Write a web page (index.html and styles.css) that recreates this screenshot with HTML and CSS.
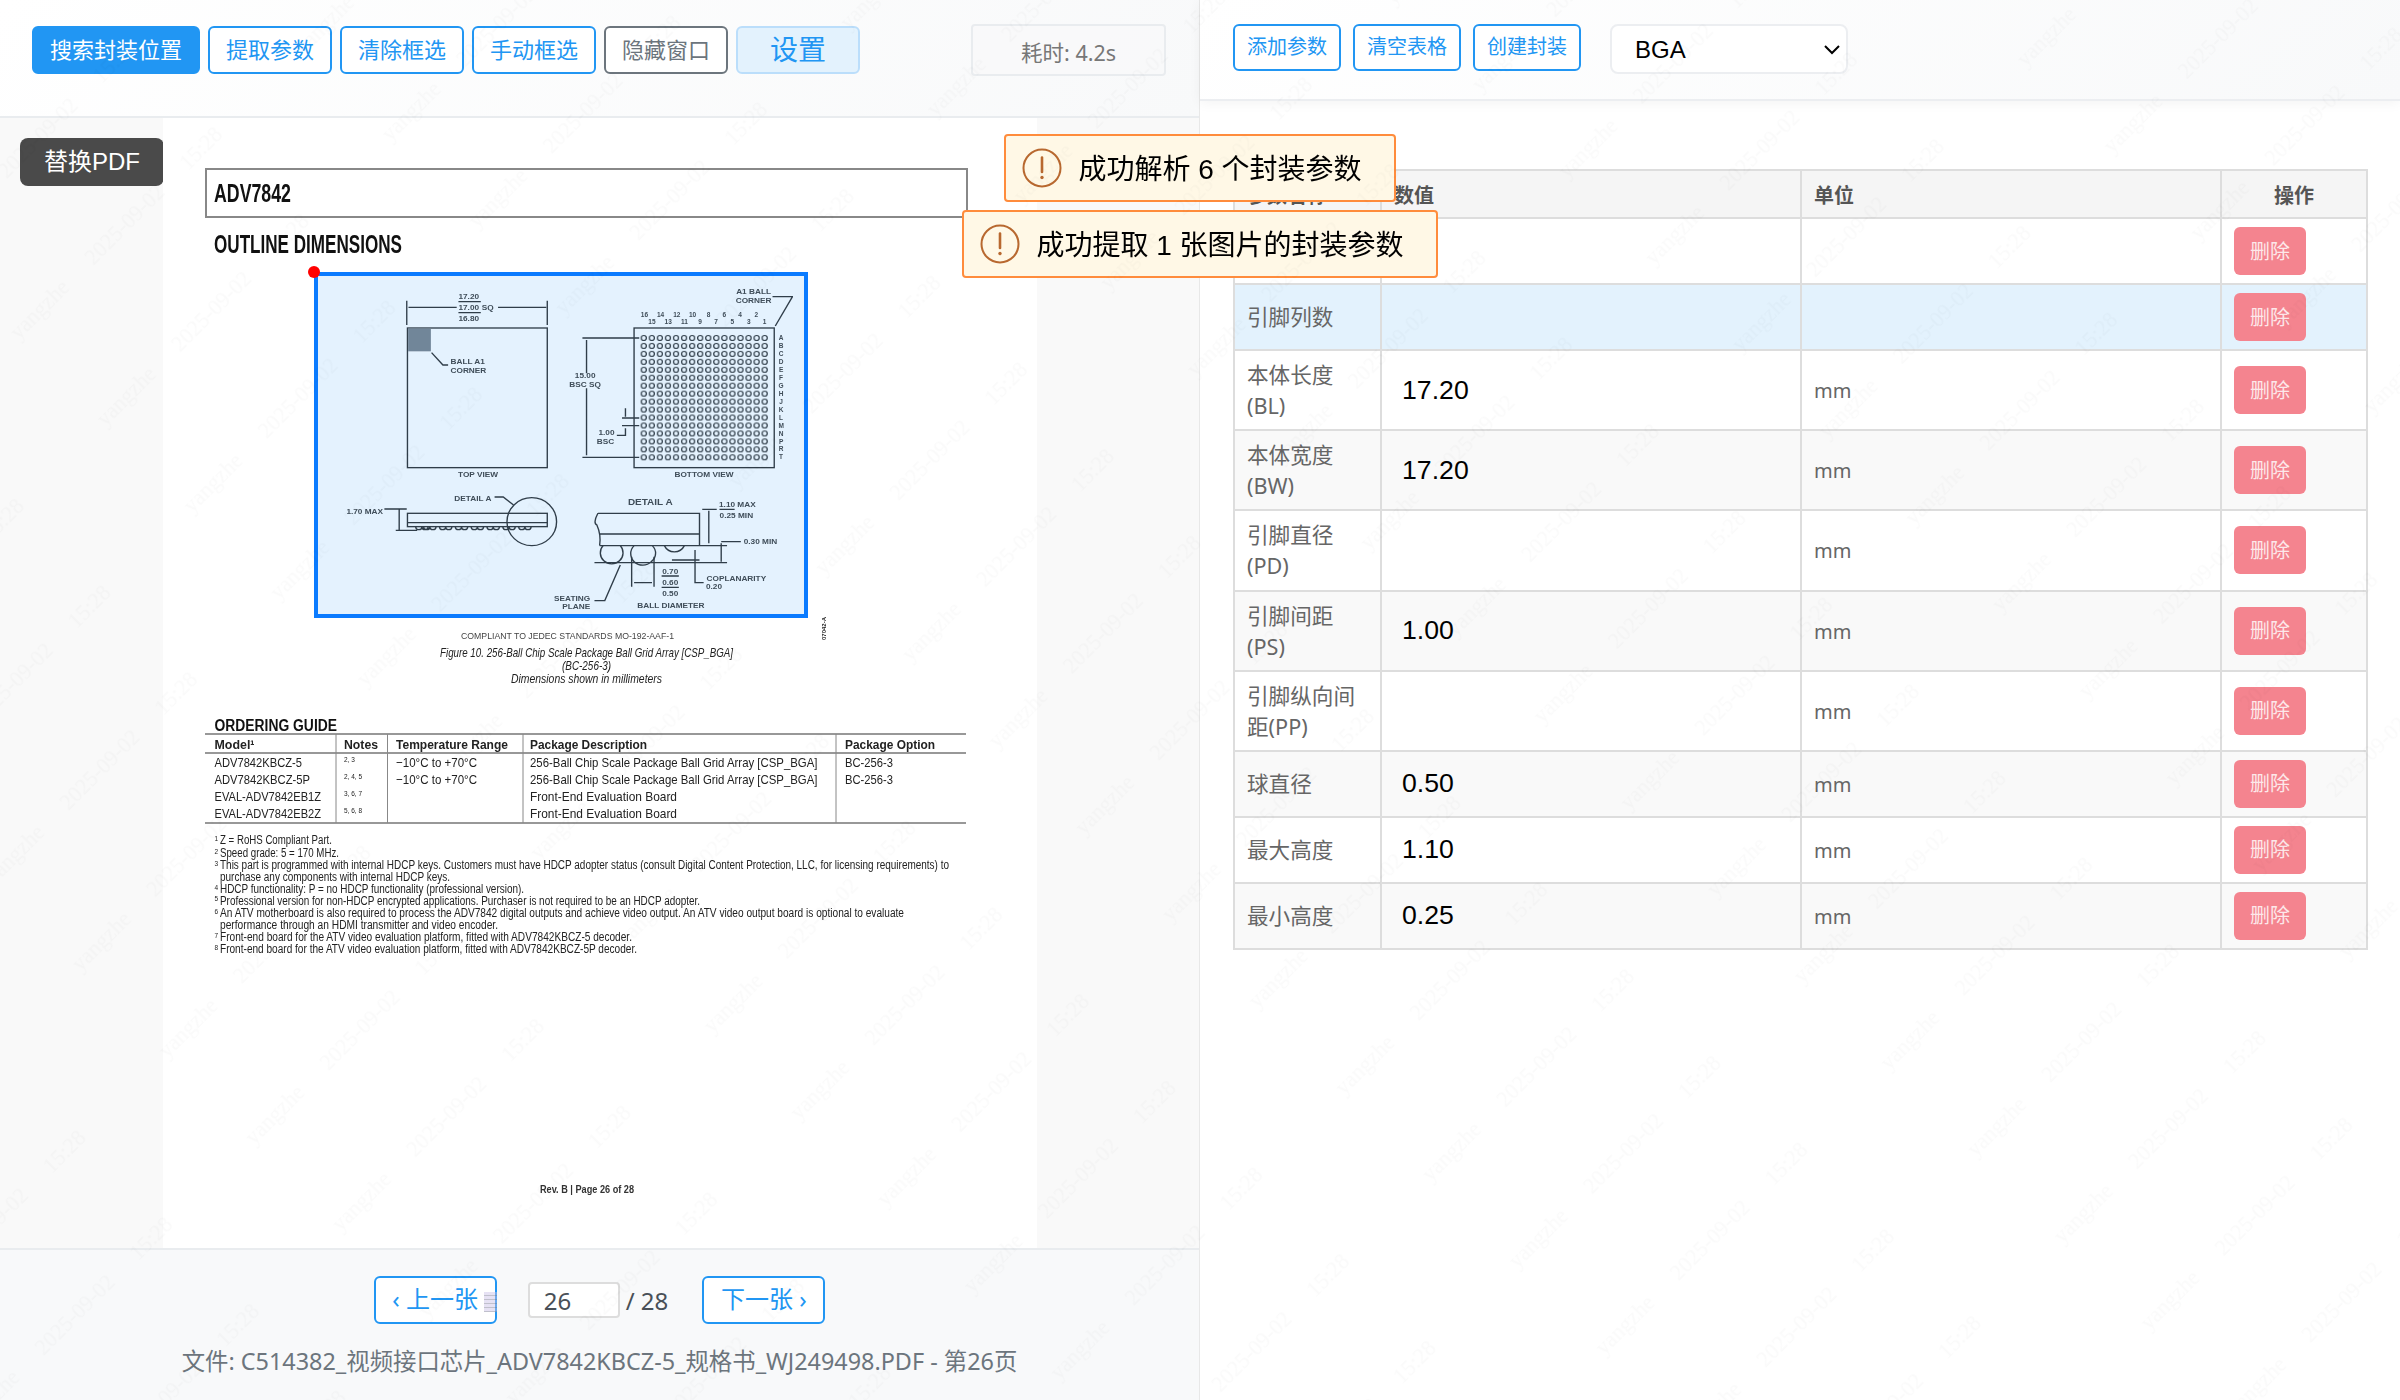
FILE: index.html
```html
<!DOCTYPE html>
<html lang="zh">
<head>
<meta charset="utf-8">
<title>封装参数提取</title>
<link rel="stylesheet" href="styles.css">
</head>
<body>
<div class="app">
  <section class="left-panel">
    <header class="left-head">
      <button class="btn btn-solid">搜索封装位置</button>
      <button class="btn btn-outline">提取参数</button>
      <button class="btn btn-outline">清除框选</button>
      <button class="btn btn-outline">手动框选</button>
      <button class="btn btn-gray">隐藏窗口</button>
      <button class="btn btn-settings">设置</button>
      <div class="time-badge">耗时: 4.2s</div>
    </header>
    <main class="viewer">
      <button class="replace-btn">替换PDF</button>
      <div class="pdf-page">
        <svg class="pdf-svg" width="874" height="1130" viewBox="163 118 874 1130" xmlns="http://www.w3.org/2000/svg">
          <defs>
            <pattern id="balls" x="986.5" y="222" width="23.4" height="23.87" patternUnits="userSpaceOnUse">
              <circle cx="11.7" cy="11.9" r="7.5" fill="none" stroke="#333" stroke-width="3.5"/>
            </pattern>
            <filter id="soft" x="0" y="0" width="100%" height="100%"><feGaussianBlur stdDeviation="1.5"/></filter>
          </defs>
          <rect x="206" y="169" width="761" height="48" fill="none" stroke="#888" stroke-width="2"/>
          <text class="pg-head" x="214" y="201.5" textLength="77" lengthAdjust="spacingAndGlyphs">ADV7842</text>
          <text class="pg-head" x="214" y="253" textLength="188" lengthAdjust="spacingAndGlyphs">OUTLINE DIMENSIONS</text>

          <g transform="translate(300 260) scale(0.3444 0.3333)" class="dg" filter="url(#soft)">
            <rect x="312" y="204" width="406" height="419"/>
            <rect x="314" y="206" width="66" height="68" fill="#7d848c" stroke="none"/>
            <path d="M382 278L415 315H430M310 122V195M718 122V195M315 142H455M575 142H715M460 125H525M460 158H525"/>
            <text x="490" y="117" class="m">17.20</text><text x="490" y="150" class="m">17.00</text><text x="545" y="150" class="m">SQ</text><text x="490" y="184" class="m">16.80</text>
            <text x="437" y="312">BALL A1</text><text x="437" y="338">CORNER</text>
            <text x="517" y="651" class="m">TOP VIEW</text>

            <rect x="970" y="204" width="407" height="419"/>
            <rect x="986.5" y="222" width="374.4" height="382" fill="url(#balls)" stroke="none"/>
            <path d="M820 234H985M820 592H985M832 240V340M832 385V586M935 474H985M935 497H985M945 445V470M945 505V526H920M1372 110H1430L1380 198"/>
            <text x="828" y="355" class="m">15.00</text><text x="828" y="381" class="m">BSC SQ</text>
            <text x="890" y="526" class="m">1.00</text><text x="887" y="552" class="m">BSC</text>
            <text x="1317" y="102" class="m">A1 BALL</text><text x="1317" y="128" class="m">CORNER</text>
            <text class="m s" x="1000" y="170">16</text><text class="m s" x="1047" y="170">14</text><text class="m s" x="1094" y="170">12</text><text class="m s" x="1140" y="170">10</text><text class="m s" x="1186" y="170">8</text><text class="m s" x="1232" y="170">6</text><text class="m s" x="1278" y="170">4</text><text class="m s" x="1325" y="170">2</text>
            <text class="m s" x="1022" y="192">15</text><text class="m s" x="1069" y="192">13</text><text class="m s" x="1116" y="192">11</text><text class="m s" x="1162" y="192">9</text><text class="m s" x="1208" y="192">7</text><text class="m s" x="1255" y="192">5</text><text class="m s" x="1303" y="192">3</text><text class="m s" x="1349" y="192">1</text>
            <text class="m s" x="1397" y="240">A</text><text class="m s" x="1397" y="264">B</text><text class="m s" x="1397" y="288">C</text><text class="m s" x="1397" y="312">D</text><text class="m s" x="1397" y="336">E</text><text class="m s" x="1397" y="359">F</text><text class="m s" x="1397" y="383">G</text><text class="m s" x="1397" y="407">H</text><text class="m s" x="1397" y="431">J</text><text class="m s" x="1397" y="455">K</text><text class="m s" x="1397" y="479">L</text><text class="m s" x="1397" y="503">M</text><text class="m s" x="1397" y="527">N</text><text class="m s" x="1397" y="551">P</text><text class="m s" x="1397" y="574">R</text><text class="m s" x="1397" y="598">T</text>
            <text x="1173" y="651" class="m">BOTTOM VIEW</text>

            <rect x="312" y="760" width="406" height="40"/>
            <path d="M312 788H718M245 747H288V811M280 747H310M278 811H340M565 711H590L620 735"/>
            <path d="M336 800a9 9 0 0 0 18 0a9 9 0 0 0 18 0M359 800a9 9 0 0 0 18 0a9 9 0 0 0 18 0M405 800a9 9 0 0 0 18 0a9 9 0 0 0 18 0M451 800a9 9 0 0 0 18 0a9 9 0 0 0 18 0M497 800a9 9 0 0 0 18 0a9 9 0 0 0 18 0M543 800a9 9 0 0 0 18 0a9 9 0 0 0 18 0M589 800a9 9 0 0 0 18 0a9 9 0 0 0 18 0M635 800a9 9 0 0 0 18 0a9 9 0 0 0 18 0"/>
            <circle cx="673" cy="785" r="72"/>
            <text x="188" y="762" class="m">1.70 MAX</text><text x="502" y="723" class="m">DETAIL A</text>

            <path d="M865 760H1160V857H870M865 760Q850 790 862 795Q875 825 870 857M870 822H1160M855 908H1240M1168 748H1210M1187 752V850M1160 857H1240M1223 845H1280M1223 850V905M1147 870V968H1172M1080 900H1160M963 890V980M1028 890V980M970 968H1022M855 1022H885L930 915M1218 748H1262M1050 948H1100M1050 982H1100"/>
            <path d="M880 857a33 33 0 1 0 50 0M970 857a32 32 0 0 0 50 48 32 32 0 0 0 3 -48M1058 857a32 32 0 0 0 58 0"/>
            <text x="1017" y="736" class="m lg">DETAIL A</text>
            <text x="1270" y="741" class="m">1.10 MAX</text><text x="1267" y="775" class="m">0.25 MIN</text><text x="1337" y="852" class="m">0.30 MIN</text>
            <text x="1267" y="962" class="m">COPLANARITY</text><text x="1202" y="988" class="m">0.20</text>
            <text x="1075" y="941" class="m">0.70</text><text x="1075" y="975" class="m">0.60</text><text x="1075" y="1009" class="m">0.50</text>
            <text x="1077" y="1043" class="m">BALL DIAMETER</text>
            <text x="790" y="1023" class="m">SEATING</text><text x="802" y="1048" class="m">PLANE</text>
          </g>
          <text class="tiny" transform="translate(826 640) rotate(-90)">07042-A</text>

          <text class="cap" x="461" y="639" textLength="213" lengthAdjust="spacingAndGlyphs">COMPLIANT TO JEDEC STANDARDS MO-192-AAF-1</text>
          <text class="fig" x="440" y="657" textLength="293" lengthAdjust="spacingAndGlyphs">Figure 10. 256-Ball Chip Scale Package Ball Grid Array [CSP_BGA]</text>
          <text class="fig" x="562" y="670" textLength="49" lengthAdjust="spacingAndGlyphs">(BC-256-3)</text>
          <text class="fig" x="511" y="683" textLength="151" lengthAdjust="spacingAndGlyphs">Dimensions shown in millimeters</text>

          <text class="og" x="214.5" y="731" textLength="122.5" lengthAdjust="spacingAndGlyphs">ORDERING GUIDE</text>
          <path class="tl" d="M205 734H966M205 753H966M205 823H966"/>
          <path class="tv" d="M336 734V823M387.500 734V823M523 734V823M836 734V823"/>
          <g class="th">
            <text x="214.5" y="748.500" textLength="40" lengthAdjust="spacingAndGlyphs">Model¹</text>
            <text x="344" y="748.500" textLength="34" lengthAdjust="spacingAndGlyphs">Notes</text>
            <text x="396" y="748.500" textLength="112" lengthAdjust="spacingAndGlyphs">Temperature Range</text>
            <text x="530" y="748.500" textLength="117" lengthAdjust="spacingAndGlyphs">Package Description</text>
            <text x="845" y="748.500" textLength="90" lengthAdjust="spacingAndGlyphs">Package Option</text>
          </g>
          <g class="td">
            <text x="214.5" y="766.500" textLength="87.500" lengthAdjust="spacingAndGlyphs">ADV7842KBCZ-5</text>
            <text x="214.5" y="783.500" textLength="95.500" lengthAdjust="spacingAndGlyphs">ADV7842KBCZ-5P</text>
            <text x="214.5" y="800.500" textLength="106.500" lengthAdjust="spacingAndGlyphs">EVAL-ADV7842EB1Z</text>
            <text x="214.5" y="817.500" textLength="106.500" lengthAdjust="spacingAndGlyphs">EVAL-ADV7842EB2Z</text>
            <text class="sup" x="344" y="762">2, 3</text><text class="sup" x="344" y="779">2, 4, 5</text><text class="sup" x="344" y="796">3, 6, 7</text><text class="sup" x="344" y="813">5, 6, 8</text>
            <text x="396" y="766.500" textLength="81" lengthAdjust="spacingAndGlyphs">−10°C to +70°C</text>
            <text x="396" y="783.500" textLength="81" lengthAdjust="spacingAndGlyphs">−10°C to +70°C</text>
            <text x="530" y="766.500" textLength="287.500" lengthAdjust="spacingAndGlyphs">256-Ball Chip Scale Package Ball Grid Array [CSP_BGA]</text>
            <text x="530" y="783.500" textLength="287.500" lengthAdjust="spacingAndGlyphs">256-Ball Chip Scale Package Ball Grid Array [CSP_BGA]</text>
            <text x="530" y="800.500" textLength="147" lengthAdjust="spacingAndGlyphs">Front-End Evaluation Board</text>
            <text x="530" y="817.500" textLength="147" lengthAdjust="spacingAndGlyphs">Front-End Evaluation Board</text>
            <text x="845" y="766.500" textLength="48" lengthAdjust="spacingAndGlyphs">BC-256-3</text>
            <text x="845" y="783.500" textLength="48" lengthAdjust="spacingAndGlyphs">BC-256-3</text>
          </g>
          <g class="fn">
            <text class="sup" x="214.5" y="841">1</text><text x="220" y="844" textLength="112" lengthAdjust="spacingAndGlyphs">Z = RoHS Compliant Part.</text>
            <text class="sup" x="214.5" y="854">2</text><text x="220" y="857" textLength="119" lengthAdjust="spacingAndGlyphs">Speed grade: 5 = 170 MHz.</text>
            <text class="sup" x="214.5" y="866">3</text><text x="220" y="869" textLength="729" lengthAdjust="spacingAndGlyphs">This part is programmed with internal HDCP keys. Customers must have HDCP adopter status (consult Digital Content Protection, LLC, for licensing requirements) to</text>
            <text x="220" y="880.500" textLength="230" lengthAdjust="spacingAndGlyphs">purchase any components with internal HDCP keys.</text>
            <text class="sup" x="214.5" y="890">4</text><text x="220" y="893" textLength="304" lengthAdjust="spacingAndGlyphs">HDCP functionality: P = no HDCP functionality (professional version).</text>
            <text class="sup" x="214.5" y="901">5</text><text x="220" y="904.500" textLength="480" lengthAdjust="spacingAndGlyphs">Professional version for non-HDCP encrypted applications. Purchaser is not required to be an HDCP adopter.</text>
            <text class="sup" x="214.5" y="914">6</text><text x="220" y="917" textLength="684" lengthAdjust="spacingAndGlyphs">An ATV motherboard is also required to process the ADV7842 digital outputs and achieve video output. An ATV video output board is optional to evaluate</text>
            <text x="220" y="929" textLength="278" lengthAdjust="spacingAndGlyphs">performance through an HDMI transmitter and video encoder.</text>
            <text class="sup" x="214.5" y="938">7</text><text x="220" y="941" textLength="412" lengthAdjust="spacingAndGlyphs">Front-end board for the ATV video evaluation platform, fitted with ADV7842KBCZ-5 decoder.</text>
            <text class="sup" x="214.5" y="950">8</text><text x="220" y="953" textLength="417" lengthAdjust="spacingAndGlyphs">Front-end board for the ATV video evaluation platform, fitted with ADV7842KBCZ-5P decoder.</text>
          </g>
          <text class="rev" x="540" y="1193" textLength="94" lengthAdjust="spacingAndGlyphs">Rev. B | Page 26 of 28</text>
        </svg>
        <div class="selection"><span class="sel-dot"></span></div>
      </div>
    </main>
    <footer class="left-foot">
      <div class="pager">
        <button class="btn btn-outline btn-page">‹ 上一张<span class="drag-mark"></span></button>
        <input class="page-input" value="26">
        <span class="page-total">/ 28</span>
        <button class="btn btn-outline btn-page btn-next">下一张 ›</button>
      </div>
      <div class="file-line">文件: C514382_视频接口芯片_ADV7842KBCZ-5_规格书_WJ249498.PDF - 第26页</div>
    </footer>
  </section>

  <section class="right-panel">
    <header class="right-head">
      <button class="btn btn-outline btn-sm">添加参数</button>
      <button class="btn btn-outline btn-sm">清空表格</button>
      <button class="btn btn-outline btn-sm">创建封装</button>
      <div class="select-wrap">
        <select class="pkg-select"><option>BGA</option></select>
        <svg class="select-chevron" width="18" height="11" viewBox="0 0 18 11"><path d="M2 2l7 7 7-7" fill="none" stroke="#000" stroke-width="2"/></svg>
      </div>
    </header>
    <div class="table-wrap">
      <table class="param-table">
        <colgroup><col class="c-name"><col class="c-val"><col class="c-val"><col class="c-op"></colgroup>
        <thead>
          <tr class="head-row"><th>参数名称</th><th>数值</th><th>单位</th><th class="center">操作</th></tr>
        </thead>
        <tbody>
          <tr><td class="name">引脚行数</td><td><input class="val" value=""></td><td></td><td><button class="del">删除</button></td></tr>
          <tr class="selected"><td class="name">引脚列数</td><td><input class="val" value=""></td><td></td><td><button class="del">删除</button></td></tr>
          <tr><td class="name">本体长度(BL)</td><td><input class="val" value="17.20"></td><td class="unit">mm</td><td><button class="del">删除</button></td></tr>
          <tr class="alt"><td class="name">本体宽度(BW)</td><td><input class="val" value="17.20"></td><td class="unit">mm</td><td><button class="del">删除</button></td></tr>
          <tr><td class="name">引脚直径(PD)</td><td><input class="val" value=""></td><td class="unit">mm</td><td><button class="del">删除</button></td></tr>
          <tr class="alt"><td class="name">引脚间距(PS)</td><td><input class="val" value="1.00"></td><td class="unit">mm</td><td><button class="del">删除</button></td></tr>
          <tr><td class="name">引脚纵向间距(PP)</td><td><input class="val" value=""></td><td class="unit">mm</td><td><button class="del">删除</button></td></tr>
          <tr class="alt"><td class="name">球直径</td><td><input class="val" value="0.50"></td><td class="unit">mm</td><td><button class="del">删除</button></td></tr>
          <tr><td class="name">最大高度</td><td><input class="val" value="1.10"></td><td class="unit">mm</td><td><button class="del">删除</button></td></tr>
          <tr class="alt"><td class="name">最小高度</td><td><input class="val" value="0.25"></td><td class="unit">mm</td><td><button class="del">删除</button></td></tr>
        </tbody>
      </table>
    </div>
  </section>
</div>

<div class="toasts">
  <div class="toast">
    <svg class="toast-ico" width="40" height="40" viewBox="0 0 40 40"><circle cx="20" cy="20" r="18.500" fill="none" stroke="#b8682f" stroke-width="2"/><path d="M20 9.500V24" stroke="#b8682f" stroke-width="2.600" stroke-linecap="round"/><circle cx="20" cy="29.500" r="1.700" fill="#b8682f"/></svg>
    <span>成功解析 6 个封装参数</span>
  </div>
  <div class="toast">
    <svg class="toast-ico" width="40" height="40" viewBox="0 0 40 40"><circle cx="20" cy="20" r="18.500" fill="none" stroke="#b8682f" stroke-width="2"/><path d="M20 9.500V24" stroke="#b8682f" stroke-width="2.600" stroke-linecap="round"/><circle cx="20" cy="29.500" r="1.700" fill="#b8682f"/></svg>
    <span>成功提取 1 张图片的封装参数</span>
  </div>
</div>

<svg class="watermark" width="2400" height="1400" xmlns="http://www.w3.org/2000/svg">
  <defs>
    <pattern id="wm" width="403" height="122.600" patternUnits="userSpaceOnUse" patternTransform="translate(1997 1127) rotate(-45) translate(-60 -61)">
      <text x="60" y="68" text-anchor="middle">yangzhe</text>
      <text x="180" y="68" text-anchor="middle">2025-09-02</text>
      <text x="288" y="68" text-anchor="middle">15:28</text>
    </pattern>
  </defs>
  <rect width="2400" height="1400" fill="url(#wm)"/>
</svg>
</body>
</html>
```
FILE: styles.css
```css
* { box-sizing: border-box; }
html, body { margin: 0; padding: 0; background: #fff; }
body { font-family: "Noto Sans", "Noto Sans CJK SC", sans-serif; color: #333; }
button, input, select { font-family: inherit; }

.app { display: flex; width: 2400px; height: 1400px; overflow: hidden; }

/* left side */
.left-panel { width: 1200px; display: flex; flex-direction: column; border-right: 1px solid #e8e8e8; }
.left-head {
  height: 118px; padding: 26px 0 0 32px; display: flex; align-items: flex-start; gap: 8px;
  background: linear-gradient(135deg, #fff 0%, #f8f9fa 100%);
  border-bottom: 2px solid #e9ecef;
}
.btn {
  height: 48px; border-radius: 6px; border: 2px solid #2196f3; background: #fff; color: #2196f3;
  font-size: 22px; line-height: 1; padding: 0 16px 3px; white-space: nowrap;
}
.btn-solid { background: #2196f3; color: #fff; }
.btn-gray { border-color: #6c757d; color: #6c757d; }
.btn-settings { width: 124px; padding: 0 0 3px; background: #e3f2fd; border-color: #bbdefb; color: #2196f3; font-size: 28px; }
.time-badge {
  width: 195px; height: 52px; margin: -2px 0 0 103px; border: 2px solid #e9ecef; border-radius: 4px;
  display: flex; align-items: center; justify-content: center; padding-top: 3px;
  font-size: 21.500px; color: #777; background: rgba(248, 249, 250, .6);
}

.viewer { position: relative; flex: 1; min-height: 0; background: #f9f9f9; display: flex; justify-content: center; }
.replace-btn {
  position: absolute; left: 20px; top: 20px; width: 144px; height: 48px; border: 0; border-radius: 8px;
  background: #4a4a4a; color: #fff; font-size: 24px; font-family: "Liberation Sans", "Noto Sans CJK SC", sans-serif; padding: 0 0 5px;
}
.pdf-page { position: relative; width: 874px; height: 1130px; background: #fff; margin-left: 1px; }
.pdf-svg { display: block; filter: blur(.45px); font-family: "Liberation Sans", sans-serif; fill: #222; }
.pg-head { font-weight: 700; font-size: 25px; fill: #111; }
.dg { fill: none; stroke: #333; stroke-width: 4; }
.dg text { font-size: 24px; font-weight: 700; fill: #444; stroke: none; }
.dg text.m { text-anchor: middle; }
.dg text.s { font-size: 19px; }
.dg text.lg { font-size: 29px; }
.tiny { font-size: 6px; font-weight: 700; fill: #222; }
.cap { font-size: 9px; fill: #444; }
.fig { font-size: 13px; font-style: italic; fill: #222; }
.og { font-size: 16px; font-weight: 700; fill: #111; }
.tl { fill: none; stroke: #777; stroke-width: 1.500; }
.tv { fill: none; stroke: #888; stroke-width: 1; }
.th { font-size: 13px; font-weight: 700; fill: #222; }
.td { font-size: 13px; fill: #222; }
.fn { font-size: 12px; fill: #222; }
.sup { font-size: 6.500px; }
.rev { font-size: 11px; font-weight: 700; fill: #333; }

.selection {
  position: absolute; left: 151px; top: 154px; width: 494px; height: 346px;
  border: 4px solid #0a7bff; background: rgba(33, 150, 243, .12);
}
.sel-dot { position: absolute; left: -10px; top: -10px; width: 12px; height: 12px; border-radius: 50%; background: #f00; }

.left-foot { height: 152px; background: #f8f9fa; border-top: 2px solid #e9ecef; padding-top: 26px; display: flex; flex-direction: column; align-items: center; }
.pager { display: flex; align-items: center; height: 48px; }
.btn-page { position: relative; width: 123px; padding: 0 0 3px; font-size: 24px; }
.drag-mark {
  position: absolute; right: -2px; top: 14px; width: 13px; height: 20px;
  background: repeating-linear-gradient(to bottom, rgba(200, 190, 230, .45) 0 3px, rgba(150, 150, 170, .6) 3px 4px);
}
.page-input {
  width: 92px; height: 36px; margin-left: 31px; border: 2px solid #ddd; border-radius: 4px; background: #fff;
  font-size: 24px; color: #495057; padding: 0 14px; outline: 0;
}
.page-total { margin: 0 34px 0 6px; font-size: 24px; color: #495057; }
.file-line { margin-top: 22px; font-size: 23.400px; line-height: 30px; color: #6c757d; white-space: nowrap; }

/* right side */
.right-panel { flex: 1; min-width: 0; display: flex; flex-direction: column; }
.right-head {
  height: 101px; padding: 24px 0 0 33px; display: flex; align-items: flex-start; gap: 12px;
  background: linear-gradient(135deg, #fff 0%, #f8f9fa 100%);
  border-bottom: 2px solid #eceef1; box-shadow: 0 2px 12px rgba(0, 0, 0, .05);
}
.btn-sm { width: 108px; height: 47px; padding: 0 0 1px; font-size: 20px; }
.select-wrap { position: relative; width: 238px; height: 50px; margin-left: 17px; }
.pkg-select {
  appearance: none; display: block; width: 100%; height: 100%; padding: 0 0 0 23px; border: 2px solid #eceef1; border-radius: 8px;
  background: #fff; color: #000; font-family: "Liberation Sans", sans-serif; font-size: 24px; outline: 0;
}
.select-chevron { position: absolute; right: 7px; top: 20px; pointer-events: none; }
.table-wrap { padding: 68px 33px 0 33px; }
.param-table { width: 1133px; table-layout: fixed; border-collapse: collapse; font-size: 22px; color: #666; }
.c-name { width: 147px; }
.c-val { width: 420px; }
.c-op { width: 146px; }
.param-table th, .param-table td { border: 2px solid #ddd; padding: 8px 12px; text-align: left; line-height: 1.4; }
.param-table th { background: #f5f5f5; font-size: 20px; font-weight: 700; color: #555; padding: 3px 12px 0; }
.param-table th.center { text-align: center; }
.param-table .name { font-size: 21.600px; line-height: 31.100px; }
.param-table .unit { font-size: 20px; padding-top: 9px; padding-bottom: 7px; }
.head-row { height: 48px; }
.alt td { background: #f9f9f9; }
.selected td { background: #e3f2fd; }
.val {
  display: block; width: 100%; border: 0; background: transparent; outline: 0; padding: 0 0 0 2px; margin-left: 6px;
  font-family: "Liberation Sans", sans-serif; font-size: 26.670px; color: #000;
}
.del { display: block; width: 72px; height: 48px; padding: 0 0 2px; border: 0; border-radius: 6px; background: #f4848f; color: #fde8ea; font-size: 20px; }

/* overlays */
.toasts { position: fixed; left: 0; right: 0; top: 134px; display: flex; flex-direction: column; align-items: center; gap: 8px; z-index: 20; pointer-events: none; }
.toast {
  height: 68px; display: flex; align-items: center; gap: 16px; padding: 0 32px 2px 16px;
  background: #fff8e6; border: 2px solid #ff8c3c; border-radius: 4px;
  font-family: "Liberation Sans", "Noto Sans CJK SC", sans-serif; font-size: 28px; color: #000;
}
.toast-ico { flex: none; margin-top: 2px; }
.watermark { position: fixed; left: 0; top: 0; z-index: 50; pointer-events: none; }
.watermark text { font-family: "Liberation Serif", serif; font-size: 22px; fill: #000; fill-opacity: .018; }
```
